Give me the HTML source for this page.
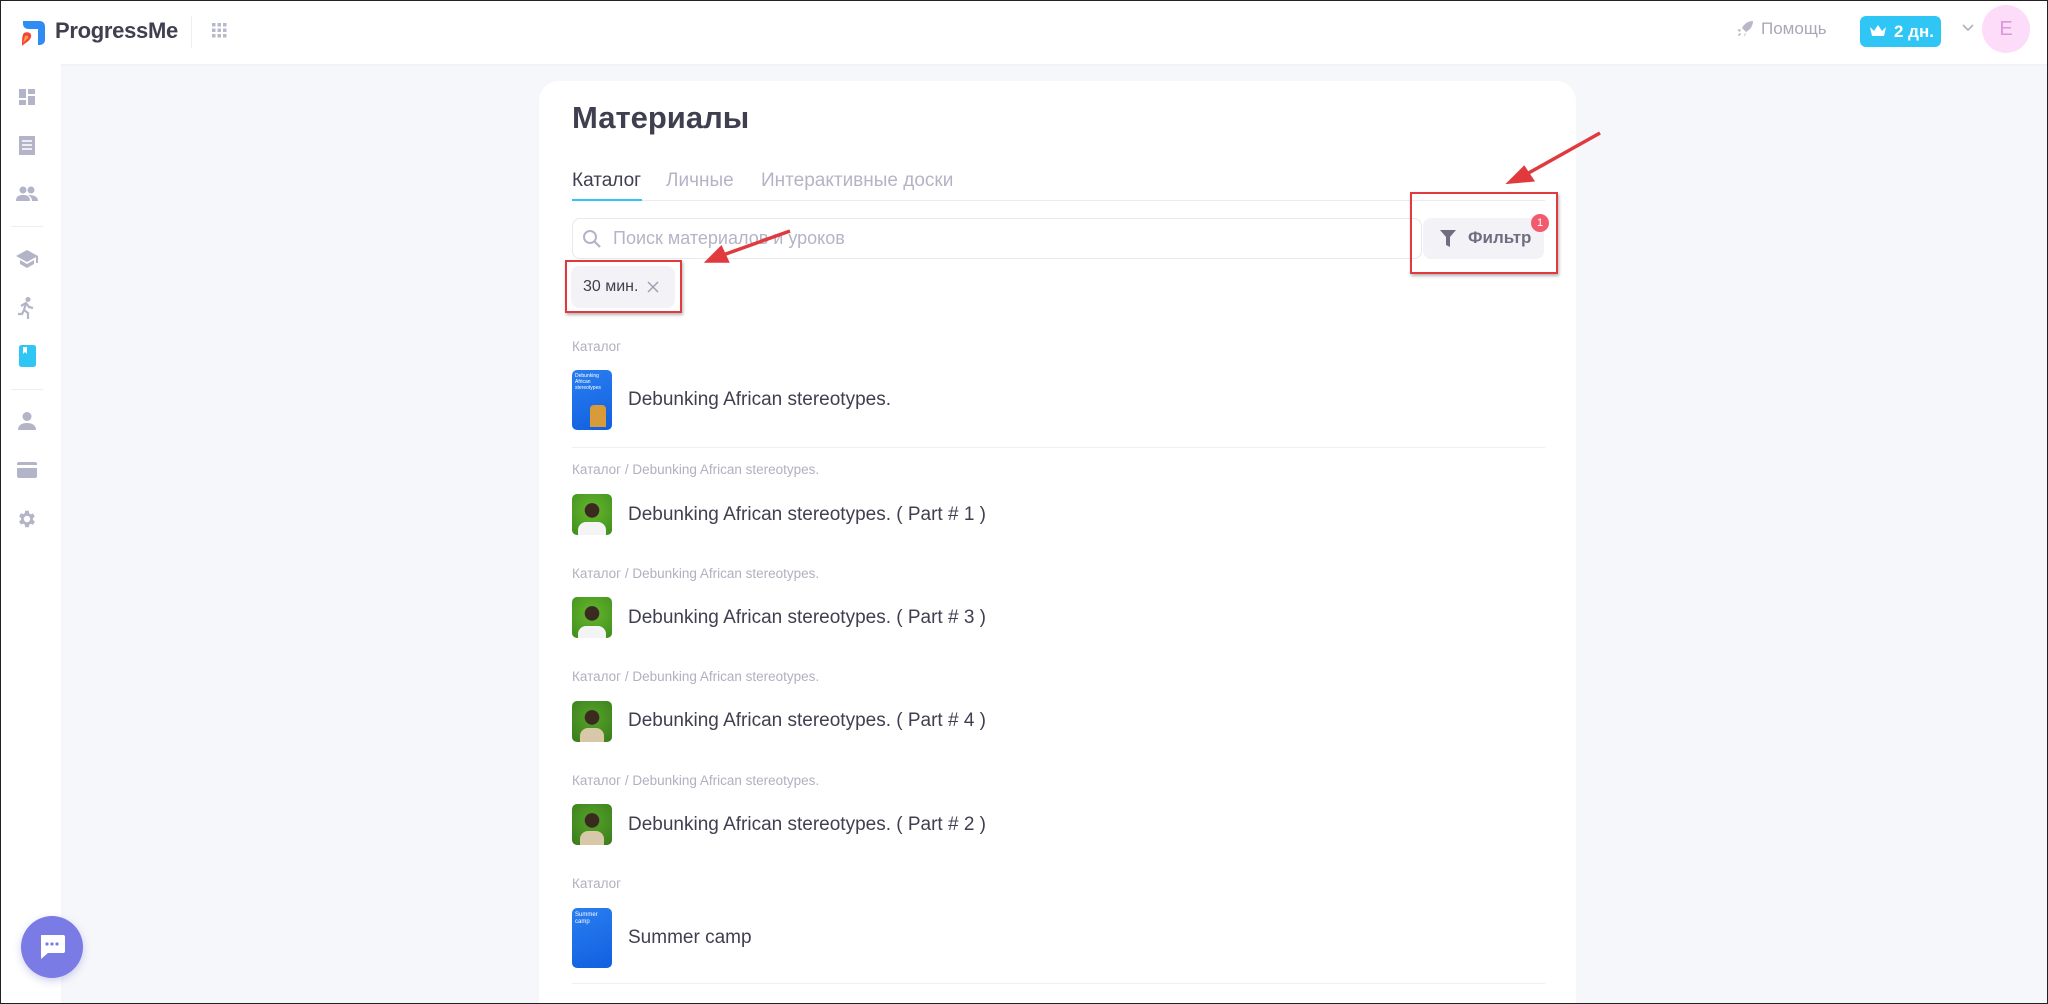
<!DOCTYPE html>
<html><head><meta charset="utf-8"><style>
*{box-sizing:border-box;margin:0;padding:0}
html,body{width:2048px;height:1004px;overflow:hidden}
body{background:#fff;font-family:"Liberation Sans","DejaVu Sans",sans-serif}
#w{position:relative;width:2048px;height:1004px;overflow:hidden;background:#f6f7fb}
#bd{position:absolute;left:0;top:0;width:2048px;height:1004px;border:1.5px solid #222;pointer-events:none}
.abs{position:absolute}
.hdr{left:0;top:0;width:2048px;height:64px;background:#fff;box-shadow:0 1px 3px rgba(0,0,0,.04)}
.side{left:0;top:64px;width:61px;height:940px;background:#fff}
.card{left:539px;top:81px;width:1037px;height:940px;background:#fff;border-radius:20px}
.lbl{font-size:13.5px;color:#b0b0c0;left:572px}
.ttl{font-size:19px;color:#3f3f50;left:628px}
.th{left:572px;border-radius:5px;width:40px;height:41px}
.sep{left:572px;width:973px;height:1px;background:#eeeef3}
.ic{fill:#b4b4c8}
</style></head><body><div id="w">
<div class="abs hdr"></div>
<svg class="abs" style="left:20px;top:19px" width="26" height="28" viewBox="0 0 26 28"><path d="M3 2h17a5 5 0 0 1 5 5v14a5 5 0 0 1-5 5h-2V10H8a5 5 0 0 1-5-5z" fill="#2f8cf3"/><path d="M4 14c4-2 8 0 7 4-1 4-6 6-9 9 0-5 0-11 2-13z" fill="#f2443a"/><path d="M5 17c2-1 4 0 3 2l-5 5z" fill="#f9a23c"/></svg>
<div class="abs" style="left:55px;top:18px;font-size:22px;font-weight:bold;color:#3f3f50;letter-spacing:-.3px">ProgressMe</div>
<div class="abs" style="left:191px;top:16px;width:1px;height:32px;background:#eee"></div>
<svg class="abs" style="left:212px;top:23px" width="15" height="15"><g fill="#b8b8cc"><rect x="0" y="0" width="3.5" height="3.5"/><rect x="5.5" y="0" width="3.5" height="3.5"/><rect x="11" y="0" width="3.5" height="3.5"/><rect x="0" y="5.5" width="3.5" height="3.5"/><rect x="5.5" y="5.5" width="3.5" height="3.5"/><rect x="11" y="5.5" width="3.5" height="3.5"/><rect x="0" y="11" width="3.5" height="3.5"/><rect x="5.5" y="11" width="3.5" height="3.5"/><rect x="11" y="11" width="3.5" height="3.5"/></g></svg>
<svg class="abs" style="left:1736px;top:20px" width="18" height="18" viewBox="0 0 18 18"><path d="M17 1c-5 0-9 3-11 7l4 4c4-2 7-6 7-11zM5 9l-4 1 3 2zM9 13l-1 4 2-3zM4 13c-2 1-2 3-2 3s2 0 3-2z" fill="#b8b8c8"/></svg>
<div class="abs" style="left:1761px;top:19px;font-size:17px;color:#a8a8b8">Помощь</div>
<div class="abs" style="left:1860px;top:16px;width:81px;height:31px;background:#2fc6f6;border-radius:6px;color:#fff;font-weight:bold;font-size:17px;line-height:31px;padding-left:34px">2 дн.</div>
<svg class="abs" style="left:1869px;top:24px" width="18" height="14"><path d="M1 3l4 4 4-6 4 6 4-4-2 9H3z" fill="#fff"/></svg>
<svg class="abs" style="left:1962px;top:24px" width="12" height="8"><path d="M1 1l5 5 5-5" stroke="#b0b0c0" stroke-width="1.6" fill="none"/></svg>
<div class="abs" style="left:1982px;top:5px;width:48px;height:48px;border-radius:50%;background:#fcdcf8;color:#d89ad8;font-size:20px;text-align:center;line-height:48px">E</div>

<div class="abs side"></div>
<svg class="abs" style="left:19px;top:89px" width="16" height="16"><path class="ic" d="M0 0h7v9H0zM9 0h7v5H9zM9 7h7v9H9zM0 11h7v5H0z"/></svg>
<svg class="abs" style="left:19px;top:136px" width="16" height="19"><path class="ic" d="M0 0h16v19H0z"/><path d="M3 5h10M3 9h10M3 13h10" stroke="#fff" stroke-width="1.5"/></svg>
<svg class="abs" style="left:16px;top:186px" width="22" height="15"><circle class="ic" cx="7" cy="4" r="3.5"/><circle class="ic" cx="15" cy="4" r="3.5"/><path class="ic" d="M0 15c0-5 3-6 7-6s7 1 7 6zM12 9c5 0 10 1 10 6h-6c0-3-2-5-4-6z"/></svg>
<div class="abs" style="left:11px;top:226px;width:32px;height:1px;background:#eee"></div>
<svg class="abs" style="left:16px;top:250px" width="22" height="18"><path class="ic" d="M11 0L0 6l11 6 9-5v6h2V6zM4 10v4l7 4 7-4v-4l-7 4z"/></svg>
<svg class="abs" style="left:18px;top:297px" width="16" height="22"><circle class="ic" cx="10" cy="2.5" r="2.5"/><path d="M3 9l5-3 3 4 4 1M8 6l-2 7 4 3v6M6 13l-2 4H0" stroke="#b4b4c8" stroke-width="2.2" fill="none"/></svg>
<svg class="abs" style="left:19px;top:345px" width="17" height="22"><rect x="0" y="0" width="17" height="22" rx="2.5" fill="#2fc6f6"/><path d="M4 2h4v7l-2-2-2 2z" fill="#fff"/></svg>
<div class="abs" style="left:11px;top:389px;width:32px;height:1px;background:#eee"></div>
<svg class="abs" style="left:18px;top:412px" width="18" height="18"><circle class="ic" cx="9" cy="4.5" r="4.5"/><path class="ic" d="M0 18c0-5 4-7 9-7s9 2 9 7z"/></svg>
<svg class="abs" style="left:17px;top:462px" width="20" height="16"><rect class="ic" width="20" height="16" rx="2"/><rect x="0" y="3" width="20" height="3" fill="#fff"/></svg>
<svg class="abs" style="left:16px;top:508px" width="22" height="22" viewBox="0 0 24 24"><path class="ic" d="M19.4 13a7.5 7.5 0 0 0 0-2l2.1-1.6-2-3.5-2.5 1a7 7 0 0 0-1.7-1L15 3h-4l-.4 2.7a7 7 0 0 0-1.7 1l-2.5-1-2 3.5L6.6 11a7.5 7.5 0 0 0 0 2l-2.2 1.6 2 3.5 2.5-1a7 7 0 0 0 1.7 1L11 21h4l.4-2.7a7 7 0 0 0 1.7-1l2.5 1 2-3.5zM13 15.5a3.5 3.5 0 1 1 0-7 3.5 3.5 0 0 1 0 7z" transform="translate(-1 0)"/></svg>

<div class="abs card"></div>
<div class="abs" style="left:572px;top:100px;font-size:31px;font-weight:bold;color:#3f3f50">Материалы</div>
<div class="abs" style="left:572px;top:170px;font-size:19px;color:#3f3f50">Каталог</div>
<div class="abs" style="left:666px;top:170px;font-size:19px;color:#b4b4c6">Личные</div>
<div class="abs" style="left:761px;top:170px;font-size:19px;color:#b4b4c6">Интерактивные доски</div>
<div class="abs" style="left:572px;top:200px;width:973px;height:1px;background:#ebebf0"></div>
<div class="abs" style="left:572px;top:199px;width:70px;height:2px;background:#2fc6f6"></div>
<div class="abs" style="left:572px;top:218px;width:850px;height:41px;border:1px solid #e8e8ee;border-radius:8px"></div>
<svg class="abs" style="left:582px;top:229px" width="20" height="20"><circle cx="8" cy="8" r="6" stroke="#b4b4c6" stroke-width="2" fill="none"/><path d="M12.5 12.5L18 18" stroke="#b4b4c6" stroke-width="2.2"/></svg>
<div class="abs" style="left:613px;top:228px;font-size:18px;color:#b4b4c6">Поиск материалов и уроков</div>
<div class="abs" style="left:1423px;top:218px;width:121px;height:41px;background:#f3f3f7;border-radius:8px"></div>
<svg class="abs" style="left:1440px;top:230px" width="16" height="17"><path d="M0 0h16l-6 7v10l-4-2V7z" fill="#6e6e80"/></svg>
<div class="abs" style="left:1468px;top:228px;font-size:17px;font-weight:bold;color:#6e6e80">Фильтр</div>
<div class="abs" style="left:1531px;top:214px;width:18px;height:18px;border-radius:50%;background:#f25a6e;color:#fff;font-size:11px;text-align:center;line-height:18px">1</div>
<div class="abs" style="left:1410px;top:192px;width:148px;height:82px;border:2px solid #e0393e;box-shadow:1px 2px 3px rgba(0,0,0,.3)"></div>

<div class="abs" style="left:571px;top:266px;width:104px;height:42px;background:#f3f3f7;border-radius:8px;font-size:16px;color:#3f3f50;line-height:42px;padding-left:12px">30 мин.</div>
<svg class="abs" style="left:647px;top:281px" width="12" height="12"><path d="M1 1l10 10M11 1L1 11" stroke="#a0a0b0" stroke-width="1.5"/></svg>
<div class="abs" style="left:565px;top:260px;width:117px;height:53px;border:2px solid #e0393e;box-shadow:1px 2px 3px rgba(0,0,0,.3)"></div>

<svg class="abs" style="left:0;top:0" width="2048" height="1004"><g stroke="#e0393e" stroke-width="3.5" fill="#e0393e"><path d="M1600 133L1525 175"/><path d="M1510 182l14-14 8 12z"/><path d="M790 231L723 255"/><path d="M708 261l13-13 6 13z"/></g></svg>

<div class="abs lbl" style="top:339px">Каталог</div>
<div class="abs th" style="top:370px;height:60px;background:linear-gradient(160deg,#2a7ef0,#1160e0)"></div>
<div class="abs" style="left:575px;top:373px;font-size:5px;color:#fff;line-height:6px">Debunking<br>African<br>stereotypes</div>
<div class="abs" style="left:590px;top:405px;width:16px;height:22px;background:#d89b3a;border-radius:4px 4px 0 0"></div>
<div class="abs ttl" style="top:389px">Debunking African stereotypes.</div>
<div class="abs sep" style="top:447px"></div>

<div class="abs lbl" style="top:462px">Каталог / Debunking African stereotypes.</div>
<div class="abs th" style="top:494px;background:radial-gradient(circle at 50% 40%,#3a2a20 22%,#5cad2a 24%,#3d8e1c);"></div><div class="abs" style="left:578px;top:522px;width:28px;height:13px;background:#f4f4f4;border-radius:8px 8px 0 0"></div>
<div class="abs ttl" style="top:504px">Debunking African stereotypes. ( Part # 1 )</div>

<div class="abs lbl" style="top:566px">Каталог / Debunking African stereotypes.</div>
<div class="abs th" style="top:597px;background:radial-gradient(circle at 50% 40%,#3a2a20 22%,#5cad2a 24%,#3d8e1c);"></div><div class="abs" style="left:578px;top:626px;width:28px;height:12px;background:#f4f4f4;border-radius:8px 8px 0 0"></div>
<div class="abs ttl" style="top:607px">Debunking African stereotypes. ( Part # 3 )</div>

<div class="abs lbl" style="top:669px">Каталог / Debunking African stereotypes.</div>
<div class="abs th" style="top:701px;background:radial-gradient(circle at 50% 40%,#3a2a20 22%,#4e9a26 24%,#3a7a1c);"></div><div class="abs" style="left:580px;top:728px;width:24px;height:14px;background:#d8c8a8;border-radius:8px 8px 0 0"></div>
<div class="abs ttl" style="top:710px">Debunking African stereotypes. ( Part # 4 )</div>

<div class="abs lbl" style="top:773px">Каталог / Debunking African stereotypes.</div>
<div class="abs th" style="top:804px;background:radial-gradient(circle at 50% 40%,#3a2a20 22%,#4e9a26 24%,#3a7a1c);"></div><div class="abs" style="left:580px;top:831px;width:24px;height:14px;background:#d8c8a8;border-radius:8px 8px 0 0"></div>
<div class="abs ttl" style="top:814px">Debunking African stereotypes. ( Part # 2 )</div>

<div class="abs lbl" style="top:876px">Каталог</div>
<div class="abs th" style="top:908px;height:60px;background:linear-gradient(160deg,#2a7ef0,#1160e0)"></div>
<div class="abs" style="left:575px;top:912px;font-size:6px;color:#fff;line-height:7px">Summer<br>camp</div>
<div class="abs ttl" style="top:927px">Summer camp</div>
<div class="abs sep" style="top:983px"></div>

<div class="abs" style="left:21px;top:916px;width:62px;height:62px;border-radius:50%;background:#7b7be6;box-shadow:0 3px 8px rgba(100,100,200,.3)"></div>
<svg class="abs" style="left:38px;top:933px" width="28" height="28"><path d="M3 2h22a2 2 0 0 1 2 2v14a2 2 0 0 1-2 2H10l-7 6z" fill="#fff"/><circle cx="9" cy="11" r="1.6" fill="#7b7be6"/><circle cx="14" cy="11" r="1.6" fill="#7b7be6"/><circle cx="19" cy="11" r="1.6" fill="#7b7be6"/></svg>
<div id="bd"></div>
</div></body></html>
